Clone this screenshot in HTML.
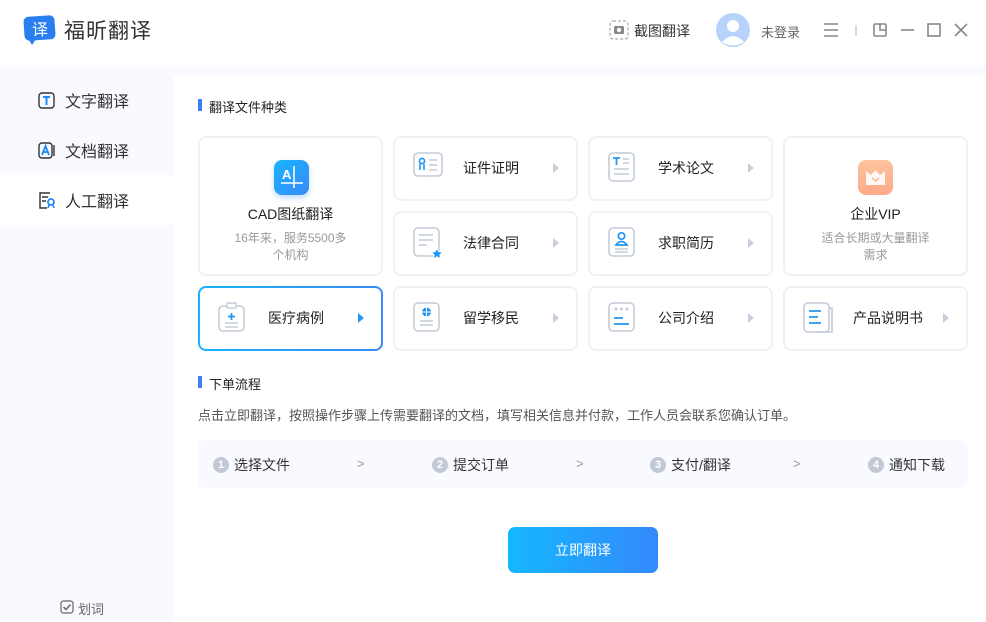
<!DOCTYPE html>
<html><head><meta charset="utf-8"><style>
*{margin:0;padding:0;box-sizing:border-box}
body{width:986px;height:622px;position:relative;overflow:hidden;background:#fff;font-family:"Liberation Sans","Noto Sans CJK SC",sans-serif;color:#222}
.a{position:absolute}
.card{position:absolute;border:2px solid #eef1f6;border-radius:8px;background:#fff}
.sm .t{position:absolute;left:68px;top:0;line-height:60px;font-size:14px;color:#222}
.sm .ar{position:absolute;left:158px;top:25px;width:0;height:0;border-left:6px solid #c9d0dc;border-top:5px solid transparent;border-bottom:5px solid transparent}
.sm svg{position:absolute;left:18px;top:14px}
.nav{position:absolute;left:38px;font-size:16px;color:#333;display:flex;align-items:center}
.nav svg{margin-right:10px}
.step{position:absolute;top:455px;font-size:14px;color:#333;display:flex;align-items:center}
.num{width:16px;height:16px;border-radius:50%;background:#c2c9d6;color:#fff;font-size:11px;font-weight:bold;text-align:center;line-height:16px;margin-right:5px}
.gt{position:absolute;top:456px;color:#999;font-size:13px}
</style></head><body>
<svg class="a" style="left:22px;top:14px" width="36" height="32" viewBox="0 0 36 32"><rect x="2" y="2" width="31" height="24" rx="5" fill="#2a7ff0" transform="rotate(-4 18 14)"/><path d="M6 24 L10 31 L14 25Z" fill="#2a7ff0"/><text x="10" y="21" font-size="16" fill="#fff" font-family="Noto Sans CJK SC">译</text></svg>
<div class="a" style="left:64px;top:15px;font-size:21px;color:#333;letter-spacing:1px">福昕翻译</div>
<svg class="a" style="left:609px;top:20px" width="20" height="20"><rect x="1" y="1" width="18" height="18" rx="3" fill="none" stroke="#999" stroke-dasharray="3 2"/><rect x="5" y="6" width="10" height="8" rx="1.5" fill="#888"/><circle cx="10" cy="10" r="2.2" fill="#fff"/></svg>
<div class="a" style="left:634px;top:21px;font-size:14px;color:#333">截图翻译</div>
<svg class="a" style="left:716px;top:13px" width="34" height="34"><circle cx="17" cy="17" r="17" fill="#b7d3fb"/><circle cx="17" cy="13" r="6" fill="#fff"/><path d="M6 29 Q17 17 28 29 Q17 36 6 29Z" fill="#fff"/></svg>
<div class="a" style="left:761px;top:22px;font-size:13px;color:#666">未登录</div>
<svg class="a" style="left:822px;top:21px" width="150" height="20"><g stroke="#888" stroke-width="1.6" fill="none"><path d="M2 3h14M2 9h14M2 15h14"/><path d="M34 4v11" stroke="#ccc"/><rect x="52" y="3" width="12" height="12" rx="1"/><path d="M58 3v6h6"/><path d="M79 9h13"/><rect x="106" y="3" width="12" height="12"/><path d="M133 3l12 12M145 3l-12 12"/></g></svg>
<div class="a" style="left:0;top:65px;width:986px;height:10px;background:#f8faff"></div>
<div class="a" style="left:0;top:65px;width:173px;height:557px;background:#f8faff"></div>
<div class="a" style="left:0;top:175px;width:173px;height:50px;background:#fff"></div>
<div class="nav" style="top:88px"><svg width="17" height="17"><rect x="1" y="1" width="15" height="15" rx="3" fill="none" stroke="#333" stroke-width="1.4"/><path d="M5 5h7M8.5 5v8" stroke="#1e88f5" stroke-width="2"/></svg>文字翻译</div>
<div class="nav" style="top:138px"><svg width="17" height="17"><rect x="1" y="1" width="13" height="15" rx="3" fill="none" stroke="#333" stroke-width="1.4"/><path d="M4 13l3.5-9 3.5 9M5 10h5" stroke="#1e88f5" stroke-width="1.8" fill="none"/><path d="M16 3v11" stroke="#333" stroke-width="1.4"/></svg>文档翻译</div>
<div class="nav" style="top:188px"><svg width="17" height="17"><path d="M12 1H2v15h7" fill="none" stroke="#333" stroke-width="1.4"/><path d="M4 5h6M4 9h4" stroke="#333" stroke-width="1.4"/><circle cx="13" cy="10" r="3" fill="none" stroke="#1e88f5" stroke-width="1.8"/><path d="M11 13l-1 3M15 13l1 3" stroke="#1e88f5" stroke-width="1.6"/></svg>人工翻译</div>
<svg class="a" style="left:60px;top:600px" width="14" height="14"><rect x="1" y="1" width="12" height="12" rx="2.5" fill="none" stroke="#666" stroke-width="1.2"/><path d="M3.5 7l2.5 2.5 4.5-5" stroke="#666" stroke-width="1.5" fill="none"/></svg>
<div class="a" style="left:78px;top:599px;font-size:13px;color:#666">划词</div>
<div class="a" style="left:198px;top:99px;width:4px;height:12px;background:#3d7ff6"></div>
<div class="a" style="left:209px;top:97px;font-size:13px;color:#222">翻译文件种类</div>
<div class="card" style="left:198px;top:136px;width:185px;height:140px">
<div class="a" style="left:74px;top:22px;width:35px;height:35px;border-radius:8px;background:linear-gradient(135deg,#18b4ff,#3a8af8);box-shadow:0 3px 6px rgba(40,140,250,.3)"><svg width="35" height="35"><text x="8" y="19" font-size="13" font-weight="bold" fill="#fff" font-family="Liberation Sans">A</text><path d="M20 6v22M7 23h22" stroke="#fff" stroke-width="1.5"/></svg></div>
<div class="a" style="left:0;width:181px;top:66px;text-align:center;font-size:14px">CAD图纸翻译</div>
<div class="a" style="left:0;width:181px;top:92px;text-align:center;font-size:12px;color:#999;line-height:17px">16年来，服务5500多<br>个机构</div>
</div>
<div class="card sm" style="left:393px;top:136px;width:185px;height:65px"><svg width="30" height="26"><rect x="1" y="1" width="28" height="23" rx="4" fill="none" stroke="#c4cbd9" stroke-width="1.6"/><circle cx="9" cy="9" r="2.6" fill="none" stroke="#2196f3" stroke-width="1.6"/><path d="M7 12v6M11 12v6" stroke="#2196f3" stroke-width="1.6"/><path d="M16 8h8M16 13h8M16 18h8" stroke="#c4cbd9" stroke-width="1.4"/></svg><div class="t">证件证明</div><div class="ar"></div></div>
<div class="card sm" style="left:588px;top:136px;width:185px;height:65px"><svg width="28" height="30"><rect x="1" y="1" width="25" height="28" rx="4" fill="none" stroke="#c4cbd9" stroke-width="1.6"/><path d="M5 6h7M8.5 6v7" stroke="#2196f3" stroke-width="1.8"/><path d="M15 7h6M15 11h6M6 17h15M6 22h15" stroke="#c4cbd9" stroke-width="1.4"/></svg><div class="t">学术论文</div><div class="ar"></div></div>
<div class="card" style="left:783px;top:136px;width:185px;height:140px">
<div class="a" style="left:73px;top:22px;width:35px;height:35px;border-radius:8px;background:linear-gradient(180deg,#fdc39b,#fda98a)"><svg width="35" height="35"><path d="M8 11l5 4 4.5-5 4.5 5 5-4v14H8z" fill="#fff" opacity=".9"/><path d="M14 18l3.5 3 3.5-3" stroke="#fdae8c" stroke-width="1.4" fill="none"/></svg></div>
<div class="a" style="left:0;width:181px;top:66px;text-align:center;font-size:14px">企业VIP</div>
<div class="a" style="left:0;width:181px;top:92px;text-align:center;font-size:12px;color:#999;line-height:17px">适合长期或大量翻译<br>需求</div>
</div>
<div class="card sm" style="left:393px;top:211px;width:185px;height:65px"><svg width="32" height="34"><rect x="1" y="1" width="25" height="28" rx="4" fill="none" stroke="#c4cbd9" stroke-width="1.6"/><path d="M6 8h14M6 13h14M6 18h8" stroke="#c4cbd9" stroke-width="1.4"/><path d="M24 21l1.8 3.6 4 .5-2.9 2.7.7 4-3.6-2-3.6 2 .7-4-2.9-2.7 4-.5z" fill="#2196f3" stroke="#fff" stroke-width="1"/></svg><div class="t">法律合同</div><div class="ar"></div></div>
<div class="card sm" style="left:588px;top:211px;width:185px;height:65px"><svg width="28" height="30"><rect x="1" y="1" width="25" height="28" rx="4" fill="none" stroke="#c4cbd9" stroke-width="1.6"/><circle cx="13.5" cy="9" r="3.2" fill="none" stroke="#2196f3" stroke-width="1.7"/><path d="M8 18q5.5-7 11 0z" fill="none" stroke="#2196f3" stroke-width="1.7"/><path d="M7 22h13M7 25h13" stroke="#c4cbd9" stroke-width="1.4"/></svg><div class="t">求职简历</div><div class="ar"></div></div>
<div class="card sm" style="left:198px;top:286px;width:185px;height:65px;border:2px solid transparent;background:linear-gradient(#fff,#fff) padding-box,linear-gradient(90deg,#18b4ff,#3a8af8) border-box"><svg width="28" height="30"><rect x="1" y="4" width="25" height="25" rx="4" fill="none" stroke="#c4cbd9" stroke-width="1.6"/><rect x="9" y="1" width="9" height="5" rx="1" fill="#fff" stroke="#c4cbd9" stroke-width="1.4"/><path d="M13.5 11v7M10 14.5h7" stroke="#2196f3" stroke-width="1.8"/><path d="M7 21h13M7 25h13" stroke="#c4cbd9" stroke-width="1.4"/></svg><div class="t">医疗病例</div><div class="ar" style="border-left-color:#2196f3"></div></div>
<div class="card sm" style="left:393px;top:286px;width:185px;height:65px"><svg width="28" height="30"><rect x="1" y="1" width="25" height="28" rx="4" fill="none" stroke="#c4cbd9" stroke-width="1.6"/><circle cx="13.5" cy="10" r="4.5" fill="#2196f3"/><path d="M9 10h9M13.5 5.5v9" stroke="#fff" stroke-width="1"/><path d="M7 19h13M7 23h13" stroke="#c4cbd9" stroke-width="1.4"/></svg><div class="t">留学移民</div><div class="ar"></div></div>
<div class="card sm" style="left:588px;top:286px;width:185px;height:65px"><svg width="28" height="30"><rect x="1" y="1" width="25" height="28" rx="4" fill="none" stroke="#c4cbd9" stroke-width="1.6"/><circle cx="8" cy="7" r="1.5" fill="#c4cbd9"/><circle cx="13.5" cy="7" r="1.5" fill="#c4cbd9"/><circle cx="19" cy="7" r="1.5" fill="#c4cbd9"/><path d="M6 16h9M6 22h15" stroke="#2196f3" stroke-width="1.8"/></svg><div class="t">公司介绍</div><div class="ar"></div></div>
<div class="card sm" style="left:783px;top:286px;width:185px;height:65px"><svg width="32" height="32"><rect x="1" y="1" width="25" height="29" rx="4" fill="none" stroke="#c4cbd9" stroke-width="1.6"/><path d="M26 6h3v24H10" fill="none" stroke="#c4cbd9" stroke-width="1.6"/><path d="M6 9h12M6 15h9M6 21h12" stroke="#2196f3" stroke-width="1.8"/></svg><div class="t" style="left:68px">产品说明书</div><div class="ar"></div></div>
<div class="a" style="left:198px;top:376px;width:4px;height:12px;background:#3d7ff6"></div>
<div class="a" style="left:209px;top:374px;font-size:13px;color:#222">下单流程</div>
<div class="a" style="left:198px;top:405px;font-size:13px;color:#555">点击立即翻译，按照操作步骤上传需要翻译的文档，填写相关信息并付款，工作人员会联系您确认订单。</div>
<div class="a" style="left:198px;top:440px;width:770px;height:48px;border-radius:7px;background:#f8faff"></div>
<div class="step" style="left:213px"><div class="num">1</div>选择文件</div>
<div class="gt" style="left:357px">&gt;</div>
<div class="step" style="left:432px"><div class="num">2</div>提交订单</div>
<div class="gt" style="left:576px">&gt;</div>
<div class="step" style="left:650px"><div class="num">3</div>支付/翻译</div>
<div class="gt" style="left:793px">&gt;</div>
<div class="step" style="left:868px"><div class="num">4</div>通知下载</div>
<div class="a" style="left:508px;top:527px;width:150px;height:46px;border-radius:7px;background:linear-gradient(90deg,#15b7ff,#3389fb);color:#fff;font-size:14px;text-align:center;line-height:46px">立即翻译</div>
</body></html>
